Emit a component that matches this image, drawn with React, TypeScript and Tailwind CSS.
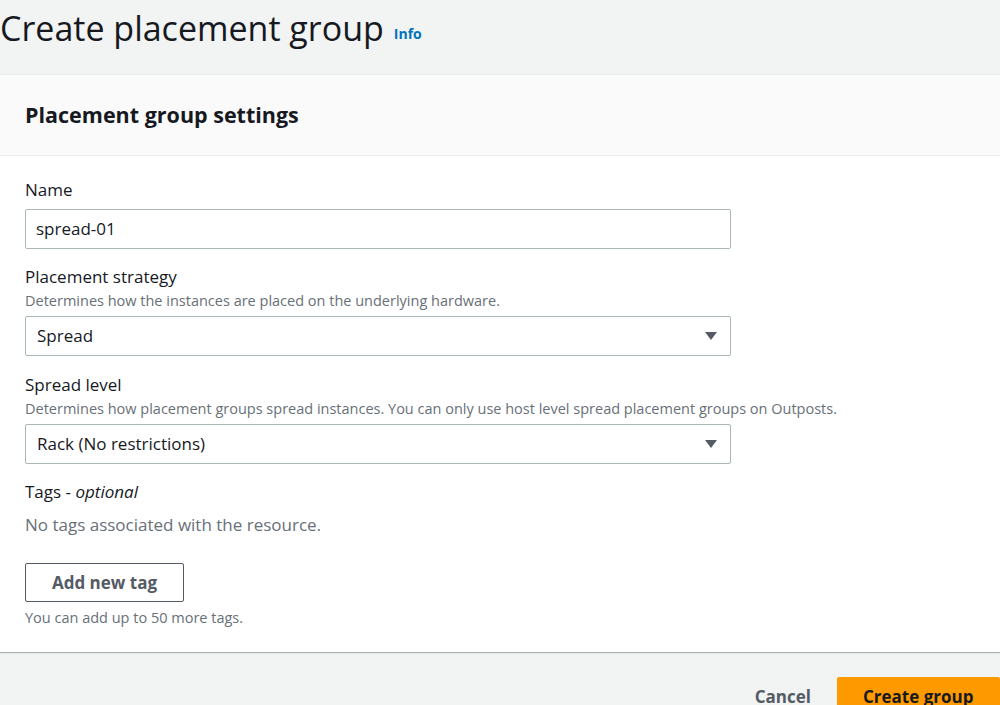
const font = { fontFamily: '"Open Sans", "Liberation Sans", sans-serif' }

function Caret() {
  return (
    <svg width="14" height="10" viewBox="0 0 14 10" className="shrink-0">
      <path d="M1 1h12L7 9z" fill="#545b64" />
    </svg>
  )
}

function Field({
  label,
  desc,
  children,
}: {
  label: React.ReactNode
  desc?: string
  children: React.ReactNode
}) {
  return (
    <div className="flex flex-col">
      <div className="text-[17px] leading-[22px] text-[#16191f]">{label}</div>
      {desc ? <div className="mt-[3px] text-[14.5px] leading-[20px] text-[#687078]">{desc}</div> : null}
      <div className={desc ? 'mt-[5px]' : 'mt-[8px]'}>{children}</div>
    </div>
  )
}

function Select({ value }: { value: string }) {
  return (
    <div className="flex h-[40px] w-[706px] items-center justify-between rounded-[2px] border border-[#aab7b8] bg-white pl-[11px] pr-[12px] text-[17px] text-[#16191f]">
      <span>{value}</span>
      <Caret />
    </div>
  )
}

export default function App() {
  return (
    <div className="h-[705px] w-[1000px] overflow-hidden bg-[#f2f3f3]" style={font}>
      <div className="flex h-[74px] items-center gap-[10px] pb-[18px]">
        <h1 className="text-[34px] leading-[44px] text-[#16191f]">Create placement group</h1>
        <a className="mt-[10px] text-[14px] font-bold text-[#0073bb]">Info</a>
      </div>
      <div className="border-t border-[#eaeded] bg-white shadow-[0_1px_1px_0_rgba(0,28,36,0.3)]">
        <div className="flex h-[81px] items-center border-b border-[#eaeded] bg-[#fafafa] px-[25px]">
          <h2 className="text-[21.5px] font-bold text-[#16191f]">Placement group settings</h2>
        </div>
        <div className="flex flex-col gap-[17px] px-[25px] pt-[23px] pb-[24px]">
          <Field label="Name">
            <div className="flex h-[40px] w-[706px] items-center rounded-[2px] border border-[#aab7b8] bg-white px-[10px] text-[17px] text-[#16191f]">
              spread-01
            </div>
          </Field>
          <Field label="Placement strategy" desc="Determines how the instances are placed on the underlying hardware.">
            <Select value="Spread" />
          </Field>
          <div className="mt-[1px]">
            <Field
              label="Spread level"
              desc="Determines how placement groups spread instances. You can only use host level spread placement groups on Outposts."
            >
              <Select value="Rack (No restrictions)" />
            </Field>
          </div>
          <div className="flex flex-col">
            <div className="text-[17px] leading-[22px] text-[#16191f]">
              Tags - <i>optional</i>
            </div>
            <div className="mt-[11px] text-[17px] leading-[22px] text-[#687078]">
              No tags associated with the resource.
            </div>
            <button className="mt-[27px] flex h-[39px] w-[159px] items-center justify-center rounded-[2px] border border-[#545b64] bg-white text-[17px] font-bold text-[#545b64]">
              Add new tag
            </button>
            <div className="mt-[6px] text-[14.5px] leading-[20px] text-[#687078]">You can add up to 50 more tags.</div>
          </div>
        </div>
      </div>
      <div className="mt-[25px] flex items-center justify-end gap-[26px]">
        <button className="text-[17px] font-bold text-[#545b64]">Cancel</button>
        <button className="h-[40px] w-[163px] rounded-[2px] bg-[#ff9900] pl-[26px] text-left text-[17px] font-bold text-[#16191f]">
          Create group
        </button>
      </div>
    </div>
  )
}
